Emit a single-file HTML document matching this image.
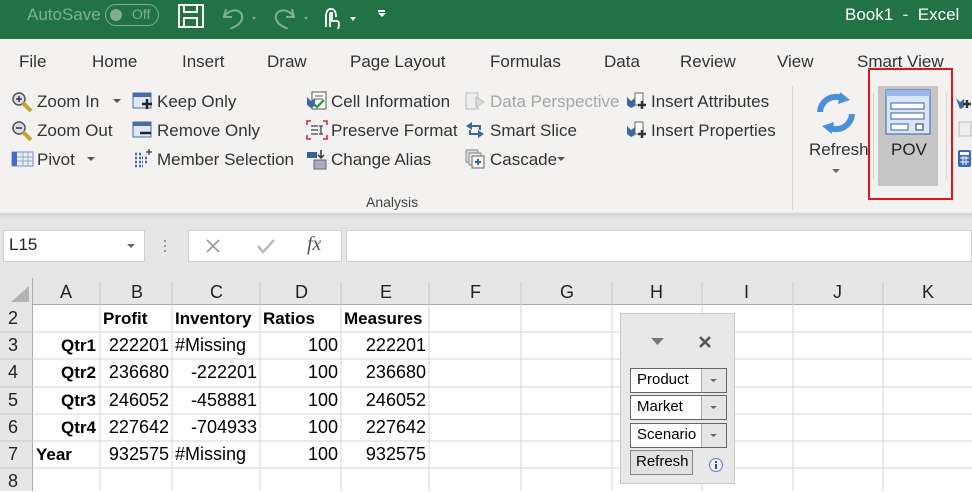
<!DOCTYPE html>
<html><head><meta charset="utf-8"><style>
*{margin:0;padding:0;box-sizing:border-box}
body{width:972px;height:491px;overflow:hidden;position:relative;font-family:"Liberation Sans",sans-serif;background:#fff}
.a{position:absolute;white-space:nowrap}
.t{font-size:16px;color:#333}
.r{font-size:17px;color:#333}
.cell{position:absolute;font-size:18px;color:#000;height:27px;line-height:27px}
.b{font-weight:bold;font-size:17px}
</style></head><body>
<div class="a" style="left:0;top:0;width:972px;height:39px;background:#217346"></div>
<div class="a" style="left:27px;top:5px;font-size:17px;color:#7fae93">AutoSave</div>
<div class="a" style="left:105px;top:4px;width:54px;height:22px;border:1.5px solid #7fae93;border-radius:11px"></div>
<div class="a" style="left:110px;top:9px;width:12px;height:12px;border-radius:6px;background:#7fae93"></div>
<div class="a" style="left:132px;top:6px;font-size:14px;color:#7fae93">Off</div>
<svg class="a" style="left:178px;top:4px" width="26" height="24"><rect x="1" y="1" width="24" height="22" fill="none" stroke="#fff" stroke-width="2"/><rect x="6" y="1" width="13" height="7" fill="none" stroke="#fff" stroke-width="2"/><rect x="6" y="14" width="13" height="9" fill="none" stroke="#fff" stroke-width="2"/></svg>
<svg class="a" style="left:220px;top:5px" width="40" height="24"><path d="M6 4 L4 12 L12 12 M4 12 C10 2 24 4 22 14 C20 20 14 22 10 24" fill="none" stroke="#7fae93" stroke-width="2"/><path d="M32 12 l4 0 l-2 3z" fill="#7fae93"/></svg>
<svg class="a" style="left:272px;top:5px" width="40" height="24"><path d="M20 4 L22 12 L14 12 M22 12 C16 2 2 4 4 14 C6 20 12 22 16 24" fill="none" stroke="#7fae93" stroke-width="2"/><path d="M32 12 l4 0 l-2 3z" fill="#7fae93"/></svg>
<svg class="a" style="left:320px;top:5px" width="40" height="24"><path d="M6 22 L6 12 Q6 4 11 4 Q16 4 16 12 M10 22 L10 10 Q10 7 12 8 L12 16 L17 16 Q19 16 19 20 L18 25" fill="none" stroke="#fff" stroke-width="1.8"/><path d="M30 12 l6 0 l-3 4z" fill="#fff"/></svg>
<div class="a" style="left:378px;top:10px;width:7px;height:1.5px;background:#fff"></div>
<svg class="a" style="left:378px;top:13px" width="8" height="5"><path d="M0 0 L8 0 L4 4z" fill="#fff"/></svg>
<div class="a" style="left:845px;top:5px;font-size:17px;color:#fff">Book1&nbsp; - &nbsp;Excel</div>
<div class="a" style="left:0;top:39px;width:972px;height:175px;background:#f3f2f1"></div>
<div class="a t" style="left:19px;top:52px;font-size:17px">File</div>
<div class="a t" style="left:92px;top:52px;font-size:17px">Home</div>
<div class="a t" style="left:182px;top:52px;font-size:17px">Insert</div>
<div class="a t" style="left:267px;top:52px;font-size:17px">Draw</div>
<div class="a t" style="left:350px;top:52px;font-size:17px">Page Layout</div>
<div class="a t" style="left:490px;top:52px;font-size:17px">Formulas</div>
<div class="a t" style="left:604px;top:52px;font-size:17px">Data</div>
<div class="a t" style="left:680px;top:52px;font-size:17px">Review</div>
<div class="a t" style="left:777px;top:52px;font-size:17px">View</div>
<div class="a t" style="left:857px;top:52px;font-size:17px">Smart View</div>
<svg class="a" style="left:11px;top:91px" width="24" height="22"><circle cx="8" cy="8" r="6" fill="#dde" stroke="#555" stroke-width="1.5"/><path d="M5 8h6M8 5v6" stroke="#333" stroke-width="1.5"/><path d="M12 12l8 8" stroke="#c9a227" stroke-width="4"/></svg>
<div class="a r" style="left:37px;top:92px">Zoom In</div>
<svg class="a" style="left:113px;top:99px" width="8" height="5"><path d="M0 0h8l-4 4z" fill="#555"/></svg>
<svg class="a" style="left:11px;top:120px" width="24" height="22"><circle cx="8" cy="8" r="6" fill="#dde" stroke="#555" stroke-width="1.5"/><path d="M5 8h6" stroke="#333" stroke-width="1.5"/><path d="M12 12l8 8" stroke="#c9a227" stroke-width="4"/></svg>
<div class="a r" style="left:37px;top:121px">Zoom Out</div>
<svg class="a" style="left:11px;top:150px" width="24" height="18"><rect x="1" y="2" width="21" height="14" fill="#e8eefa" stroke="#7a8fb8"/><rect x="1" y="2" width="5" height="14" fill="#3b6fd0"/><path d="M6 7h16M6 11h16M12 2v14M17 2v14" stroke="#9ab"/></svg>
<div class="a r" style="left:37px;top:150px">Pivot</div>
<svg class="a" style="left:87px;top:157px" width="8" height="5"><path d="M0 0h8l-4 4z" fill="#555"/></svg>
<svg class="a" style="left:132px;top:91px" width="22" height="20"><rect x="1" y="2" width="18" height="15" fill="#e0e8f6" stroke="#4a6aa8"/><rect x="1" y="2" width="18" height="4" fill="#4a6aa8"/><path d="M10 13h10M15 8v10" stroke="#222" stroke-width="2.5"/></svg>
<div class="a r" style="left:157px;top:92px">Keep Only</div>
<svg class="a" style="left:132px;top:120px" width="22" height="20"><rect x="1" y="2" width="18" height="15" fill="#e0e8f6" stroke="#4a6aa8"/><rect x="1" y="2" width="18" height="4" fill="#4a6aa8"/><path d="M8 13h11" stroke="#222" stroke-width="2.5"/></svg>
<div class="a r" style="left:157px;top:121px">Remove Only</div>
<svg class="a" style="left:133px;top:148px" width="22" height="22"><path d="M2 6h2M6 6h2M2 10h2M6 10h4M2 14h2M6 14h4M2 18h2M6 18h4M12 10h3M12 14h3" stroke="#4a6aa8" stroke-width="2.5" stroke-dasharray="2 1"/><path d="M16 1v6M13 4h6" stroke="#333" stroke-width="1.2"/></svg>
<div class="a r" style="left:157px;top:150px">Member Selection</div>
<svg class="a" style="left:306px;top:91px" width="22" height="20"><rect x="6" y="1" width="14" height="17" fill="#fff" stroke="#555"/><path d="M9 5h8M9 8h8" stroke="#555"/><path d="M1 6l4 4 4-3v8l-4 2-4-3z" fill="#3d6a9a"/><path d="M8 13l3 3 7-7" stroke="#1a9a3a" stroke-width="2.2" fill="none"/></svg>
<div class="a r" style="left:331px;top:92px">Cell Information</div>
<svg class="a" style="left:306px;top:120px" width="22" height="20"><path d="M1 5V1h4M17 1h4v4M21 15v4h-4M5 19H1v-4" stroke="#d22" stroke-width="1.5" fill="none"/><path d="M5 6h7M5 10h7M5 14h7M15 6v8M13 6h4M13 14h4" stroke="#444" stroke-width="1.3"/></svg>
<div class="a r" style="left:331px;top:121px">Preserve Format</div>
<svg class="a" style="left:306px;top:148px" width="22" height="22"><rect x="1" y="4" width="10" height="6" fill="#3b5f9a"/><rect x="8" y="12" width="12" height="9" fill="#aab" stroke="#667"/><path d="M15 2v8M12 7l3 3 3-3" stroke="#333" stroke-width="1.5" fill="none"/></svg>
<div class="a r" style="left:331px;top:150px">Change Alias</div>
<svg class="a" style="left:464px;top:91px" width="22" height="20"><rect x="2" y="2" width="12" height="16" fill="#eee" stroke="#bbb"/><path d="M12 6l8 5-8 5z" fill="#ddd" stroke="#bbb"/></svg>
<div class="a r" style="left:490px;top:92px;color:#a6a6a6">Data Perspective</div>
<svg class="a" style="left:464px;top:120px" width="22" height="20"><path d="M2 6l6-4v8zM20 14l-6 4v-8z" fill="#3b6a9a"/><path d="M8 6h8v4M14 14H6v-4" stroke="#3b6a9a" stroke-width="2" fill="none"/></svg>
<div class="a r" style="left:490px;top:121px">Smart Slice</div>
<svg class="a" style="left:464px;top:148px" width="22" height="22"><rect x="2" y="2" width="12" height="12" fill="#ddd" stroke="#888"/><rect x="5" y="5" width="12" height="12" fill="#e8e8e8" stroke="#888"/><rect x="8" y="8" width="12" height="12" fill="#f4f4f4" stroke="#666"/><path d="M11 14h6M14 11v6" stroke="#3b6a9a" stroke-width="2"/></svg>
<div class="a r" style="left:490px;top:150px">Cascade</div>
<svg class="a" style="left:557px;top:157px" width="8" height="5"><path d="M0 0h8l-4 4z" fill="#555"/></svg>
<svg class="a" style="left:626px;top:91px" width="22" height="22"><path d="M1 6l4 4 4-3v8l-4 2-4-3z" fill="#3d6a9a"/><rect x="9" y="2" width="8" height="12" fill="#fff" stroke="#666"/><path d="M12 14h8M16 10v8" stroke="#333" stroke-width="2.5"/></svg>
<div class="a r" style="left:651px;top:92px">Insert Attributes</div>
<svg class="a" style="left:626px;top:120px" width="22" height="22"><path d="M1 6l4 4 4-3v8l-4 2-4-3z" fill="#3d6a9a"/><rect x="9" y="2" width="8" height="12" fill="#fff" stroke="#666"/><path d="M12 14h8M16 10v8" stroke="#333" stroke-width="2.5"/></svg>
<div class="a r" style="left:651px;top:121px">Insert Properties</div>
<div class="a" style="left:366px;top:194px;font-size:14px;color:#444">Analysis</div>
<div class="a" style="left:792px;top:86px;width:1px;height:124px;background:#d2d2d2"></div>
<svg class="a" style="left:812px;top:90px" width="48" height="46"><path d="M8 22a16 16 0 0 1 24-13" fill="none" stroke="#4a8fdc" stroke-width="6"/><path d="M28 2l10 8-12 4z" fill="#4a8fdc"/><path d="M40 24a16 16 0 0 1-24 13" fill="none" stroke="#4a8fdc" stroke-width="6"/><path d="M20 44l-10-8 12-4z" fill="#4a8fdc"/></svg>
<div class="a r" style="left:809px;top:140px">Refresh</div>
<svg class="a" style="left:832px;top:169px" width="8" height="5"><path d="M0 0h8l-4 4z" fill="#666"/></svg>
<div class="a" style="left:873px;top:93px;width:1px;height:86px;background:#d2d2d2"></div>
<div class="a" style="left:878px;top:86px;width:60px;height:100px;background:#c6c6c6"></div>
<svg class="a" style="left:885px;top:89px" width="46" height="46"><rect x="1" y="1" width="44" height="44" fill="#d8e4f8" stroke="#3a5fa8"/><rect x="1" y="1" width="44" height="6" fill="#9ab8ec"/><rect x="6" y="14" width="33" height="6" fill="#fff" stroke="#3a5fa8"/><rect x="6" y="24" width="33" height="6" fill="#fff" stroke="#3a5fa8"/><rect x="6" y="35" width="17" height="6" fill="#fff" stroke="#3a5fa8"/><rect x="31" y="35" width="7" height="6" fill="#fff" stroke="#333"/></svg>
<div class="a r" style="left:891px;top:140px;color:#222">POV</div>
<div class="a" style="left:946px;top:93px;width:1px;height:86px;background:#d2d2d2"></div>
<div class="a" style="left:868px;top:68px;width:85px;height:132px;border:2px solid #e0161e"></div>
<svg class="a" style="left:955px;top:92px" width="17" height="80"><path d="M1 6l4 4 4-3v8l-4 2z" fill="#3d6a9a"/><path d="M8 12h8M12 8v8" stroke="#333" stroke-width="2.5"/><rect x="4" y="30" width="12" height="14" fill="#eee" stroke="#bbb"/><rect x="3" y="58" width="13" height="17" rx="2" fill="#3a6ab8"/><rect x="5" y="60" width="9" height="3" fill="#fff"/><path d="M5 66h9M5 70h9M8 64v9M11 64v9" stroke="#fff"/></svg>
<div class="a" style="left:0;top:213px;width:972px;height:8px;background:linear-gradient(#d4d4d4,#e6e6e6)"></div>
<div class="a" style="left:0;top:221px;width:972px;height:57px;background:#e6e6e6"></div>
<div class="a" style="left:3px;top:230px;width:142px;height:32px;background:#fff;border:1px solid #d0d0d0"></div>
<div class="a" style="left:9px;top:235px;font-size:17px;color:#222">L15</div>
<svg class="a" style="left:127px;top:244px" width="8" height="5"><path d="M0 0h8l-4 4z" fill="#666"/></svg>
<div class="a" style="left:164px;top:240px;width:2px;height:2px;background:#999;box-shadow:0 5px #999,0 10px #999"></div>
<div class="a" style="left:188px;top:230px;width:154px;height:32px;background:#fff;border:1px solid #d0d0d0"></div>
<svg class="a" style="left:205px;top:238px" width="16" height="16"><path d="M2 2l12 12M14 2L2 14" stroke="#999" stroke-width="1.6"/></svg>
<svg class="a" style="left:256px;top:238px" width="20" height="16"><path d="M2 8l5 6 11-12" stroke="#bbb" stroke-width="2.5" fill="none"/></svg>
<div class="a" style="left:307px;top:233px;font-size:20px;font-style:italic;font-family:'Liberation Serif',serif;color:#555">fx</div>
<div class="a" style="left:346px;top:230px;width:626px;height:32px;background:#fff;border:1px solid #d0d0d0"></div>
<div class="a" style="left:0;top:278px;width:972px;height:27px;background:#e6e6e6;border-bottom:1px solid #ababab"></div>
<div class="a" style="left:0;top:278px;width:33px;height:213px;background:#e6e6e6;border-right:1px solid #ababab"></div>
<svg class="a" style="left:9px;top:285px" width="22" height="18"><path d="M20 1V17H2z" fill="#b4b4b4"/></svg>
<svg class="a" style="left:0;top:0" width="972" height="491">
<g stroke="#d4d4d4" stroke-width="1">
<path d="M100 305V491M172 305V491M260 305V491M341 305V491M429 305V491M521 305V491M612 305V491M702 305V491M793 305V491M883 305V491"/>
<path d="M33 332H972M33 359H972M33 387H972M33 414H972M33 441H972M33 468H972"/>
</g>
<g stroke="#c8c8c8"><path d="M100 282V305M172 282V305M260 282V305M341 282V305M429 282V305M521 282V305M612 282V305M702 282V305M793 282V305M883 282V305M0 332H33M0 359H33M0 387H33M0 414H33M0 441H33M0 468H33"/></g>
</svg>
<div class="a" style="font-size:18px;color:#222;top:282px;left:60px">A</div>
<div class="a" style="font-size:18px;color:#222;top:282px;left:131px">B</div>
<div class="a" style="font-size:18px;color:#222;top:282px;left:210px">C</div>
<div class="a" style="font-size:18px;color:#222;top:282px;left:295px">D</div>
<div class="a" style="font-size:18px;color:#222;top:282px;left:380px">E</div>
<div class="a" style="font-size:18px;color:#222;top:282px;left:470px">F</div>
<div class="a" style="font-size:18px;color:#222;top:282px;left:560px">G</div>
<div class="a" style="font-size:18px;color:#222;top:282px;left:650px">H</div>
<div class="a" style="font-size:18px;color:#222;top:282px;left:744px">I</div>
<div class="a" style="font-size:18px;color:#222;top:282px;left:833px">J</div>
<div class="a" style="font-size:18px;color:#222;top:282px;left:922px">K</div>
<div class="a" style="font-size:18px;color:#222;left:8px;top:308px">2</div>
<div class="a" style="font-size:18px;color:#222;left:8px;top:335px">3</div>
<div class="a" style="font-size:18px;color:#222;left:8px;top:362px">4</div>
<div class="a" style="font-size:18px;color:#222;left:8px;top:390px">5</div>
<div class="a" style="font-size:18px;color:#222;left:8px;top:417px">6</div>
<div class="a" style="font-size:18px;color:#222;left:8px;top:444px">7</div>
<div class="a" style="font-size:18px;color:#222;left:8px;top:471px">8</div>
<div class="cell b" style="left:103px;top:305px">Profit</div>
<div class="cell b" style="left:175px;top:305px">Inventory</div>
<div class="cell b" style="left:263px;top:305px">Ratios</div>
<div class="cell b" style="left:344px;top:305px">Measures</div>
<div class="cell b" style="left:36px;top:332px;width:60px;text-align:right">Qtr1</div>
<div class="cell b" style="left:36px;top:359px;width:60px;text-align:right">Qtr2</div>
<div class="cell b" style="left:36px;top:387px;width:60px;text-align:right">Qtr3</div>
<div class="cell b" style="left:36px;top:414px;width:60px;text-align:right">Qtr4</div>
<div class="cell b" style="left:36px;top:441px">Year</div>
<div class="cell" style="left:100px;top:332px;width:69px;text-align:right">222201</div>
<div class="cell" style="left:100px;top:359px;width:69px;text-align:right">236680</div>
<div class="cell" style="left:100px;top:387px;width:69px;text-align:right">246052</div>
<div class="cell" style="left:100px;top:414px;width:69px;text-align:right">227642</div>
<div class="cell" style="left:100px;top:441px;width:69px;text-align:right">932575</div>
<div class="cell" style="left:175px;top:332px">#Missing</div>
<div class="cell" style="left:172px;top:359px;width:85px;text-align:right">-222201</div>
<div class="cell" style="left:172px;top:387px;width:85px;text-align:right">-458881</div>
<div class="cell" style="left:172px;top:414px;width:85px;text-align:right">-704933</div>
<div class="cell" style="left:175px;top:441px">#Missing</div>
<div class="cell" style="left:260px;top:332px;width:78px;text-align:right">100</div>
<div class="cell" style="left:260px;top:359px;width:78px;text-align:right">100</div>
<div class="cell" style="left:260px;top:387px;width:78px;text-align:right">100</div>
<div class="cell" style="left:260px;top:414px;width:78px;text-align:right">100</div>
<div class="cell" style="left:260px;top:441px;width:78px;text-align:right">100</div>
<div class="cell" style="left:341px;top:332px;width:85px;text-align:right">222201</div>
<div class="cell" style="left:341px;top:359px;width:85px;text-align:right">236680</div>
<div class="cell" style="left:341px;top:387px;width:85px;text-align:right">246052</div>
<div class="cell" style="left:341px;top:414px;width:85px;text-align:right">227642</div>
<div class="cell" style="left:341px;top:441px;width:85px;text-align:right">932575</div>
<div class="a" style="left:620px;top:313px;width:115px;height:171px;background:#e8e8e8;border:1px solid #c8c8c8"></div>
<svg class="a" style="left:651px;top:338px" width="14" height="8"><path d="M0 0h13l-6.5 7z" fill="#777"/></svg>
<svg class="a" style="left:698px;top:335px" width="14" height="14"><path d="M2 2l10 10M12 2L2 12" stroke="#555" stroke-width="2.6"/></svg>
<div class="a" style="left:630px;top:368px;width:97px;height:25px;background:#fff;border:1px solid #666"></div>
<div class="a" style="left:701px;top:369px;width:25px;height:23px;background:#e6e6e6;border-left:1px solid #aaa"></div>
<div class="a" style="left:630px;top:395px;width:97px;height:25px;background:#fff;border:1px solid #666"></div>
<div class="a" style="left:701px;top:396px;width:25px;height:23px;background:#e6e6e6;border-left:1px solid #aaa"></div>
<div class="a" style="left:630px;top:423px;width:97px;height:25px;background:#fff;border:1px solid #666"></div>
<div class="a" style="left:701px;top:424px;width:25px;height:23px;background:#e6e6e6;border-left:1px solid #aaa"></div>
<div class="a" style="left:637px;top:371px;font-size:15px">Product</div>
<div class="a" style="left:637px;top:398px;font-size:15px">Market</div>
<div class="a" style="left:637px;top:426px;font-size:15px">Scenario</div>
<svg class="a" style="left:710px;top:379px" width="8" height="4"><path d="M0 0h7l-3.5 3z" fill="#666"/></svg>
<svg class="a" style="left:710px;top:406px" width="8" height="4"><path d="M0 0h7l-3.5 3z" fill="#666"/></svg>
<svg class="a" style="left:710px;top:434px" width="8" height="4"><path d="M0 0h7l-3.5 3z" fill="#666"/></svg>
<div class="a" style="left:630px;top:450px;width:63px;height:25px;background:#e1e1e1;border:1px solid #888"></div>
<div class="a" style="left:636px;top:453px;font-size:15px">Refresh</div>
<svg class="a" style="left:708px;top:457px" width="16" height="16"><circle cx="8" cy="8" r="6.5" fill="#eef" stroke="#6a7fb0"/><rect x="7" y="7" width="2" height="5" fill="#2a4fa0"/><rect x="7" y="4" width="2" height="2" fill="#2a4fa0"/></svg>
</body></html>
